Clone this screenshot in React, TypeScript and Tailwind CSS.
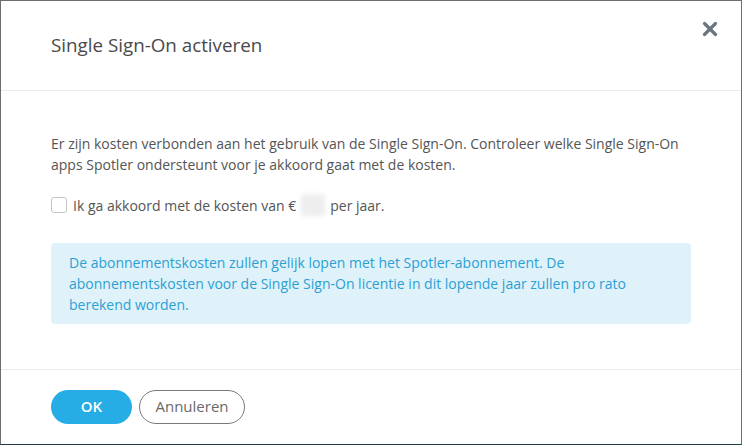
import { X } from 'lucide-react'

export default function App() {
  return (
    <div className="w-[742px] h-[445px] bg-white border border-[#6e6e6e] border-b-[#1f3b44] flex flex-col font-['Open_Sans',sans-serif] text-[#555]">
      {/* Header */}
      <div className="h-[90px] shrink-0 flex items-center justify-between pl-[50px] pr-[20px] border-b border-[#ebebeb]">
        <h1 className="text-[18.8px] text-[#4a4a4a] mt-[-1px]">Single Sign-On activeren</h1>
        <button className="self-start mt-[17px] text-[#6b7580]">
          <X size={22} strokeWidth={3.5} />
        </button>
      </div>

      {/* Body */}
      <div className="flex-1 px-[50px] pt-[42px]">
        <p className="text-[14px] leading-[21px] text-[#555]">
          Er zijn kosten verbonden aan het gebruik van de Single Sign-On. Controleer welke Single Sign-On apps Spotler ondersteunt voor je akkoord gaat met de kosten.
        </p>
        <label className="mt-[19px] flex items-center gap-[6px] text-[14px] text-[#555]">
          <span className="w-[16px] h-[16px] rounded-[3px] border border-[#c4c4c4] bg-white inline-block" />
          <span className="flex items-center">
            Ik ga akkoord met de kosten van €
            <span className="inline-block w-[24px] h-[22px] mx-[5px] bg-[#eeeeee] blur-[2px] rounded-[2px]" />
            per jaar.
          </span>
        </label>
        <div className="mt-[27px] bg-[#dff2fa] rounded-[4px] pl-[18px] pr-[30px] pt-[9px] pb-[9px] text-[14px] leading-[21px] text-[#2c9fd4]">
          De abonnementskosten zullen gelijk lopen met het Spotler-abonnement. De abonnementskosten voor de Single Sign-On licentie in dit lopende jaar zullen pro rato berekend worden.
        </div>
      </div>

      {/* Footer */}
      <div className="h-[75px] shrink-0 border-t border-[#ebebeb] flex items-center gap-[7px] pl-[50px] pb-[1px]">
        <button className="w-[81px] h-[34px] rounded-full bg-[#27ade5] text-white text-[15px] font-semibold">
          OK
        </button>
        <button className="w-[106px] h-[34px] rounded-full border border-[#7a7a7a] bg-white text-[#6a6a6a] text-[15px]">
          Annuleren
        </button>
      </div>
    </div>
  )
}
